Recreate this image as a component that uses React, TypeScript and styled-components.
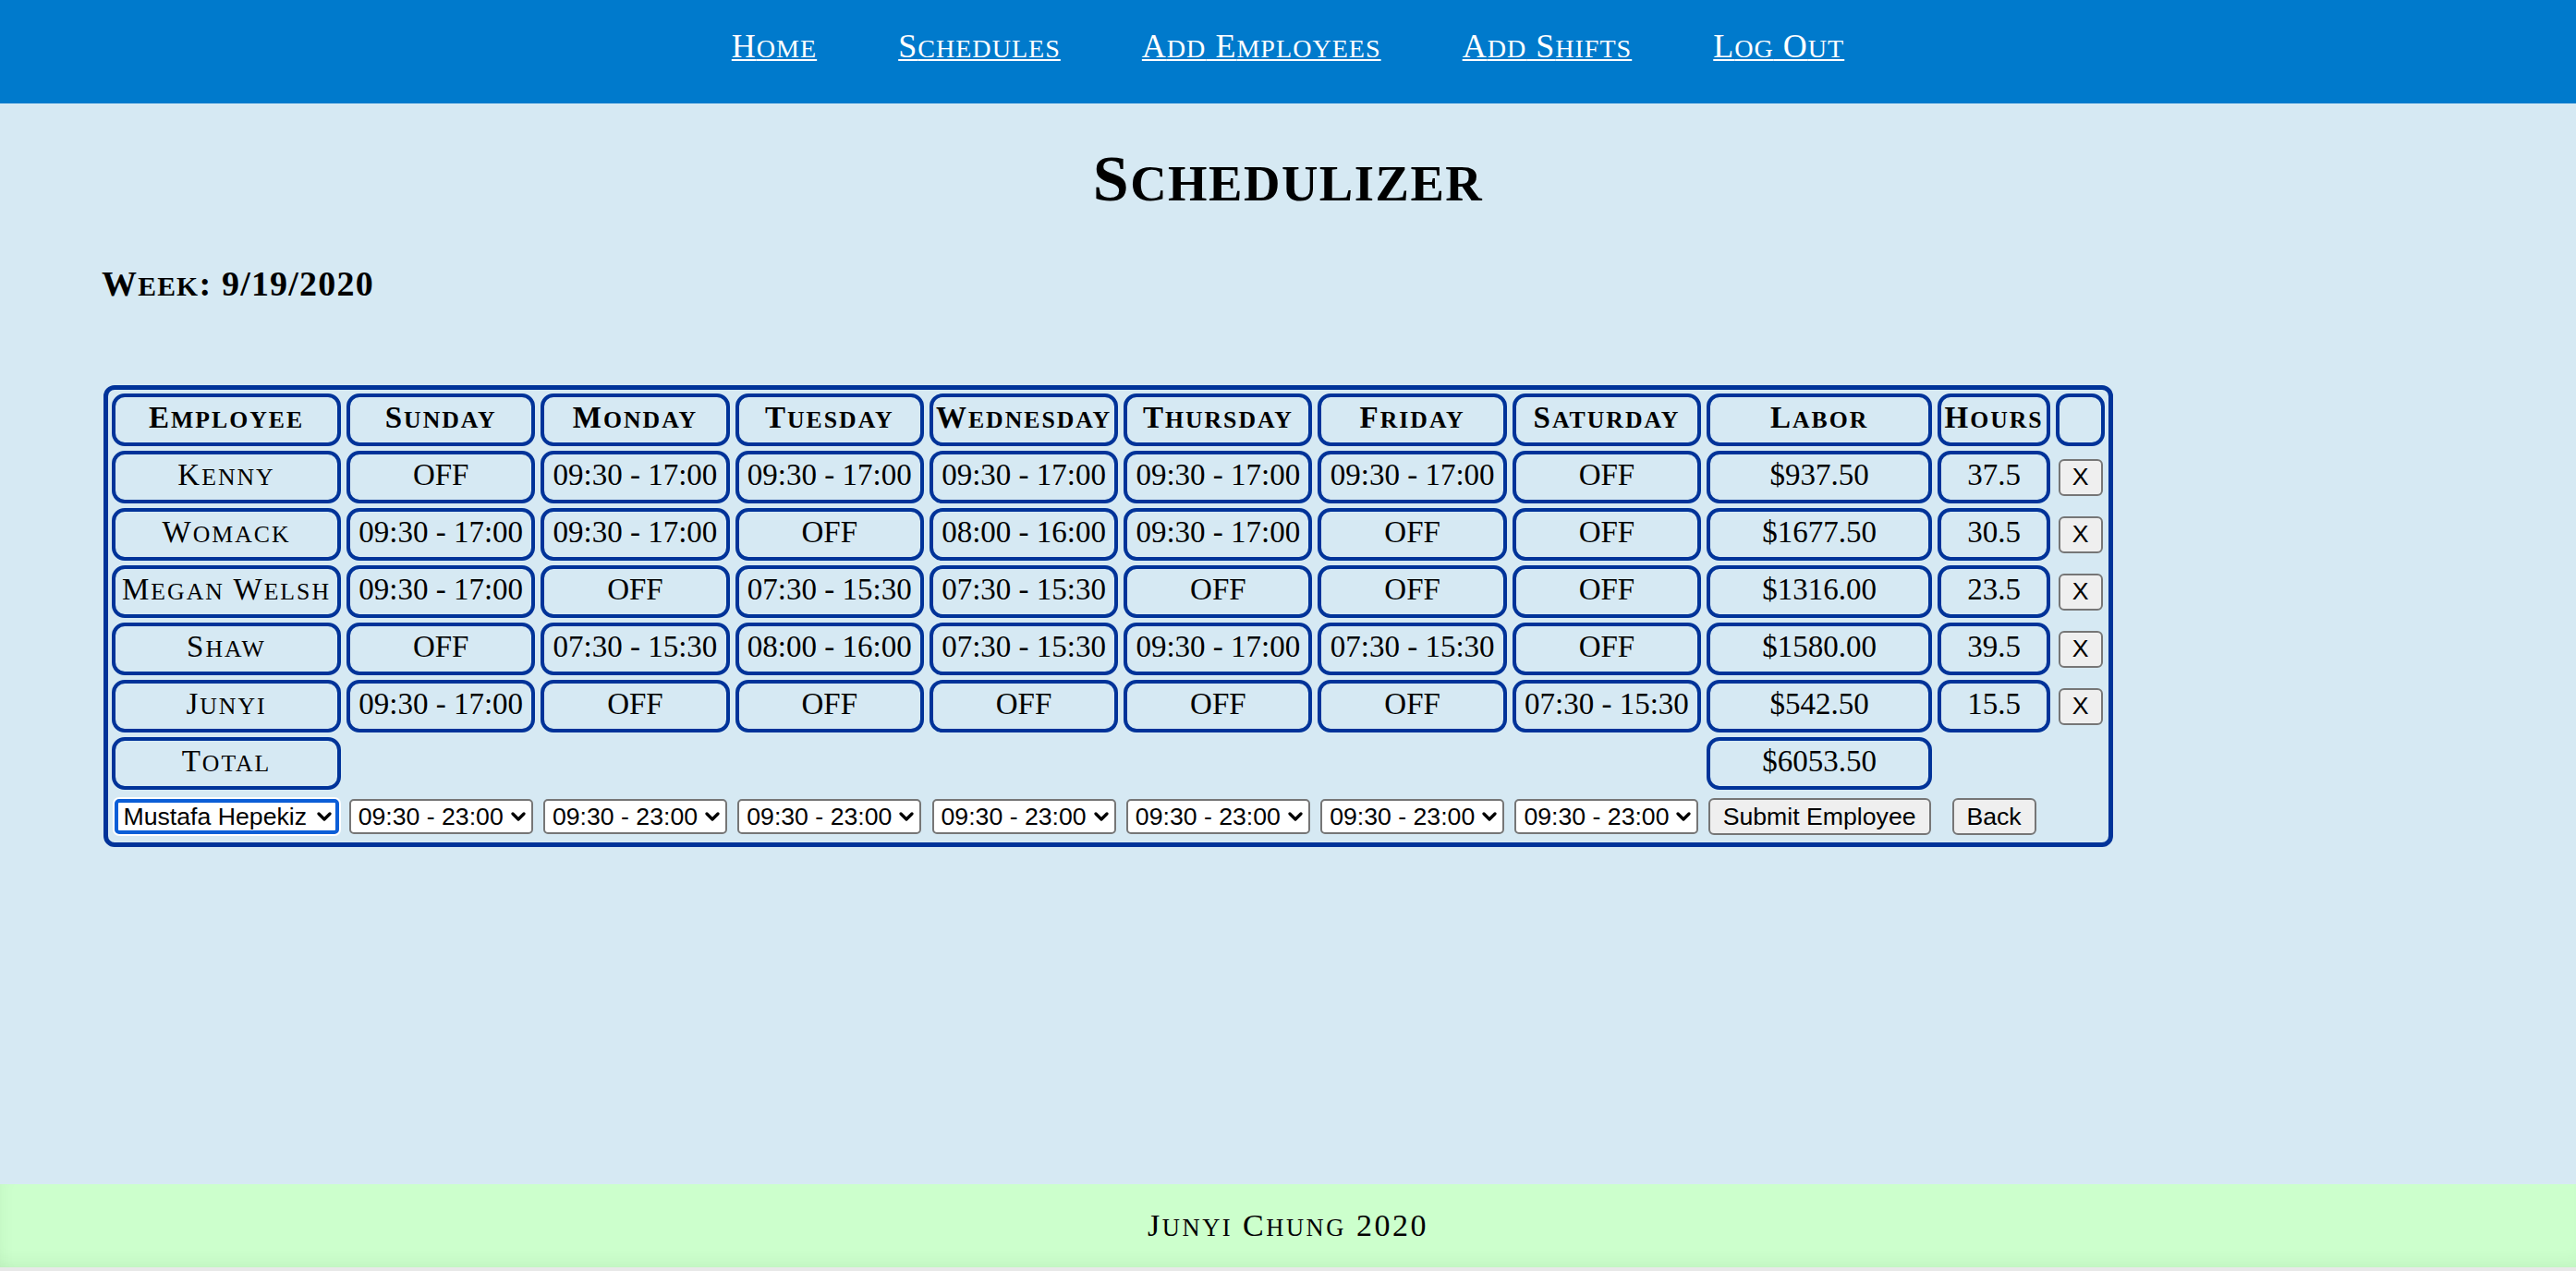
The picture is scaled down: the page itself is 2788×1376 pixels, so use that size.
import React from "react";
import styled, { createGlobalStyle, css } from "styled-components";

const GlobalStyle = createGlobalStyle`
  html, body { margin: 0; padding: 0; }
  body {
    background: #d6e9f3;
    font-family: "Liberation Serif", "Times New Roman", serif;
    color: #000;
  }
`;

const Small = styled.span`
  font-size: 0.78em;
  line-height: 0;
  text-transform: uppercase;
`;

const Caps = ({ text }: { text: string }) => (
  <span>
    {text.split(/([a-z]+)/).map((part, i) =>
      i % 2 === 1 ? <Small key={i}>{part}</Small> : <React.Fragment key={i}>{part}</React.Fragment>
    )}
  </span>
);

const Page = styled.div`
  min-height: 100vh;
  display: flex;
  flex-direction: column;
`;

const NavBar = styled.nav`
  height: 112px;
  box-sizing: border-box;
  padding-top: 32px;
  background: #007acc;
  display: flex;
  justify-content: center;
  align-items: flex-start;
  gap: 88px;
`;

const NavLink = styled.a`
  font-size: 36px;
  line-height: 36px;
  letter-spacing: 1px;
  color: #fff;
  text-decoration: underline;
  text-decoration-thickness: 2px;
  text-underline-offset: 2px;
  cursor: pointer;
`;

const Title = styled.h1`
  margin: 47px 0 0;
  font-size: 70px;
  line-height: 70px;
  font-weight: 700;
  letter-spacing: 1.5px;
  text-align: center;
`;

const Content = styled.section`
  padding-left: 110px;
  display: flex;
  flex-direction: column;
  align-items: flex-start;
`;

const Week = styled.h3`
  margin: 59px 0 0;
  font-size: 38px;
  line-height: 38px;
  font-weight: 700;
  letter-spacing: 1.2px;
`;

const Grid = styled.div`
  margin: 91px 0 0 2px;
  display: grid;
  grid-template-columns: 248px repeat(7, 204.3px) 244px 122px 53px;
  grid-template-rows: repeat(7, 57px) 48px;
  column-gap: 6px;
  row-gap: 5px;
  padding: 4px;
  border: 5px solid #003399;
  border-radius: 12px;
`;

const Cell = styled.div<{ $head?: boolean; $spaced?: boolean }>`
  box-sizing: border-box;
  border: 4px solid #003399;
  border-radius: 14px;
  display: flex;
  align-items: center;
  justify-content: center;
  padding-bottom: 5px;
  font-size: 33px;
  line-height: 33px;
  white-space: nowrap;
  font-weight: ${(p) => (p.$head ? 700 : 400)};
  letter-spacing: ${(p) => (p.$spaced ? "2px" : "0")};
`;

const Blank = styled.div<{ $span: number }>`
  grid-column: span ${(p) => p.$span};
`;

const Button = styled.button<{ $w: number }>`
  justify-self: center;
  align-self: center;
  width: ${(p) => p.$w}px;
  height: 40px;
  box-sizing: border-box;
  margin: 0;
  padding: 0;
  font-family: "Liberation Sans", Arial, sans-serif;
  font-size: 26.67px;
  color: #000;
  background: #efefef;
  border: 2px solid #767676;
  border-radius: 6px;
  cursor: pointer;
`;

const SelectWrap = styled.div<{ $w: number }>`
  position: relative;
  justify-self: center;
  align-self: center;
  width: ${(p) => p.$w}px;
  height: 38px;
  display: flex;
`;

const Select = styled.select<{ $focused?: boolean }>`
  appearance: none;
  -webkit-appearance: none;
  width: 100%;
  height: 100%;
  box-sizing: border-box;
  margin: 0;
  padding: 0 30px 0 8px;
  font-family: "Liberation Sans", Arial, sans-serif;
  font-size: 26.67px;
  color: #000;
  background: #fff;
  border: 2px solid #767676;
  border-radius: 5px;
  outline: none;
  ${(p) =>
    p.$focused &&
    css`
      border: 4px solid #0b5ed7;
      padding-left: 6px;
      box-shadow: 0 0 0 2px #fff;
    `}
`;

const Chevron = styled.svg`
  position: absolute;
  right: 8px;
  top: 50%;
  transform: translateY(-50%);
  pointer-events: none;
`;

const Footer = styled.footer`
  margin-top: auto;
  height: 90px;
  display: flex;
  align-items: center;
  justify-content: center;
  background: #ccffcc;
  border-bottom: 4px solid #e8e8e8;
  box-shadow: inset 0 -16px 22px -16px rgba(0, 60, 0, 0.09),
    inset 14px 0 20px -16px rgba(0, 60, 0, 0.06);
  font-size: 34px;
  line-height: 34px;
  letter-spacing: 2.5px;
`;

const days = ["Sunday", "Monday", "Tuesday", "Wednesday", "Thursday", "Friday", "Saturday"];

const A = "09:30 - 17:00";
const B = "07:30 - 15:30";
const C = "08:00 - 16:00";
const O = "OFF";

const rows = [
  { name: "Kenny", shifts: [O, A, A, A, A, A, O], labor: "$937.50", hours: "37.5" },
  { name: "Womack", shifts: [A, A, O, C, A, O, O], labor: "$1677.50", hours: "30.5" },
  { name: "Megan Welsh", shifts: [A, O, B, B, O, O, O], labor: "$1316.00", hours: "23.5" },
  { name: "Shaw", shifts: [O, B, C, B, A, B, O], labor: "$1580.00", hours: "39.5" },
  { name: "Junyi", shifts: [A, O, O, O, O, O, B], labor: "$542.50", hours: "15.5" },
];

const ChevronIcon = () => (
  <Chevron width="16" height="10" viewBox="0 0 16 10">
    <path d="M2 2 L8 8 L14 2" fill="none" stroke="#000" strokeWidth="3.2" strokeLinecap="round" strokeLinejoin="round" />
  </Chevron>
);

const Picker = ({ w, value, options, focused }: { w: number; value: string; options: string[]; focused?: boolean }) => (
  <SelectWrap $w={w}>
    <Select $focused={focused} defaultValue={value}>
      {options.map((o) => (
        <option key={o} value={o}>
          {o}
        </option>
      ))}
    </Select>
    <ChevronIcon />
  </SelectWrap>
);

const timeOptions = ["09:30 - 23:00", "OFF", "07:30 - 15:30", "08:00 - 16:00", "09:30 - 17:00"];
const navItems = ["Home", "Schedules", "Add Employees", "Add Shifts", "Log Out"];

export default function App() {
  return (
    <Page>
      <GlobalStyle />
      <NavBar>
        {navItems.map((n) => (
          <NavLink key={n}>
            <Caps text={n} />
          </NavLink>
        ))}
      </NavBar>
      <Title>
        <Caps text="Schedulizer" />
      </Title>
      <Content>
        <Week>
          <Caps text="Week: 9/19/2020" />
        </Week>
        <Grid>
          <Cell $head $spaced>
            <Caps text="Employee" />
          </Cell>
          {days.map((d) => (
            <Cell $head $spaced key={d}>
              <Caps text={d} />
            </Cell>
          ))}
          <Cell $head $spaced>
            <Caps text="Labor" />
          </Cell>
          <Cell $head $spaced>
            <Caps text="Hours" />
          </Cell>
          <Cell $head />
          {rows.map((r) => (
            <React.Fragment key={r.name}>
              <Cell $spaced>
                <Caps text={r.name} />
              </Cell>
              {r.shifts.map((s, i) => (
                <Cell key={i}>{s}</Cell>
              ))}
              <Cell>{r.labor}</Cell>
              <Cell>{r.hours}</Cell>
              <Button $w={48}>X</Button>
            </React.Fragment>
          ))}
          <Cell $spaced>
            <Caps text="Total" />
          </Cell>
          <Blank $span={7} />
          <Cell>$6053.50</Cell>
          <Blank $span={2} />
          <Picker w={243} value="Mustafa Hepekiz" options={["Mustafa Hepekiz", "Kenny", "Womack"]} focused />
          {days.map((d) => (
            <Picker key={d} w={199} value="09:30 - 23:00" options={timeOptions} />
          ))}
          <Button $w={241}>Submit Employee</Button>
          <Button $w={91}>Back</Button>
        </Grid>
      </Content>
      <Footer>
        <Caps text="Junyi Chung 2020" />
      </Footer>
    </Page>
  );
}
